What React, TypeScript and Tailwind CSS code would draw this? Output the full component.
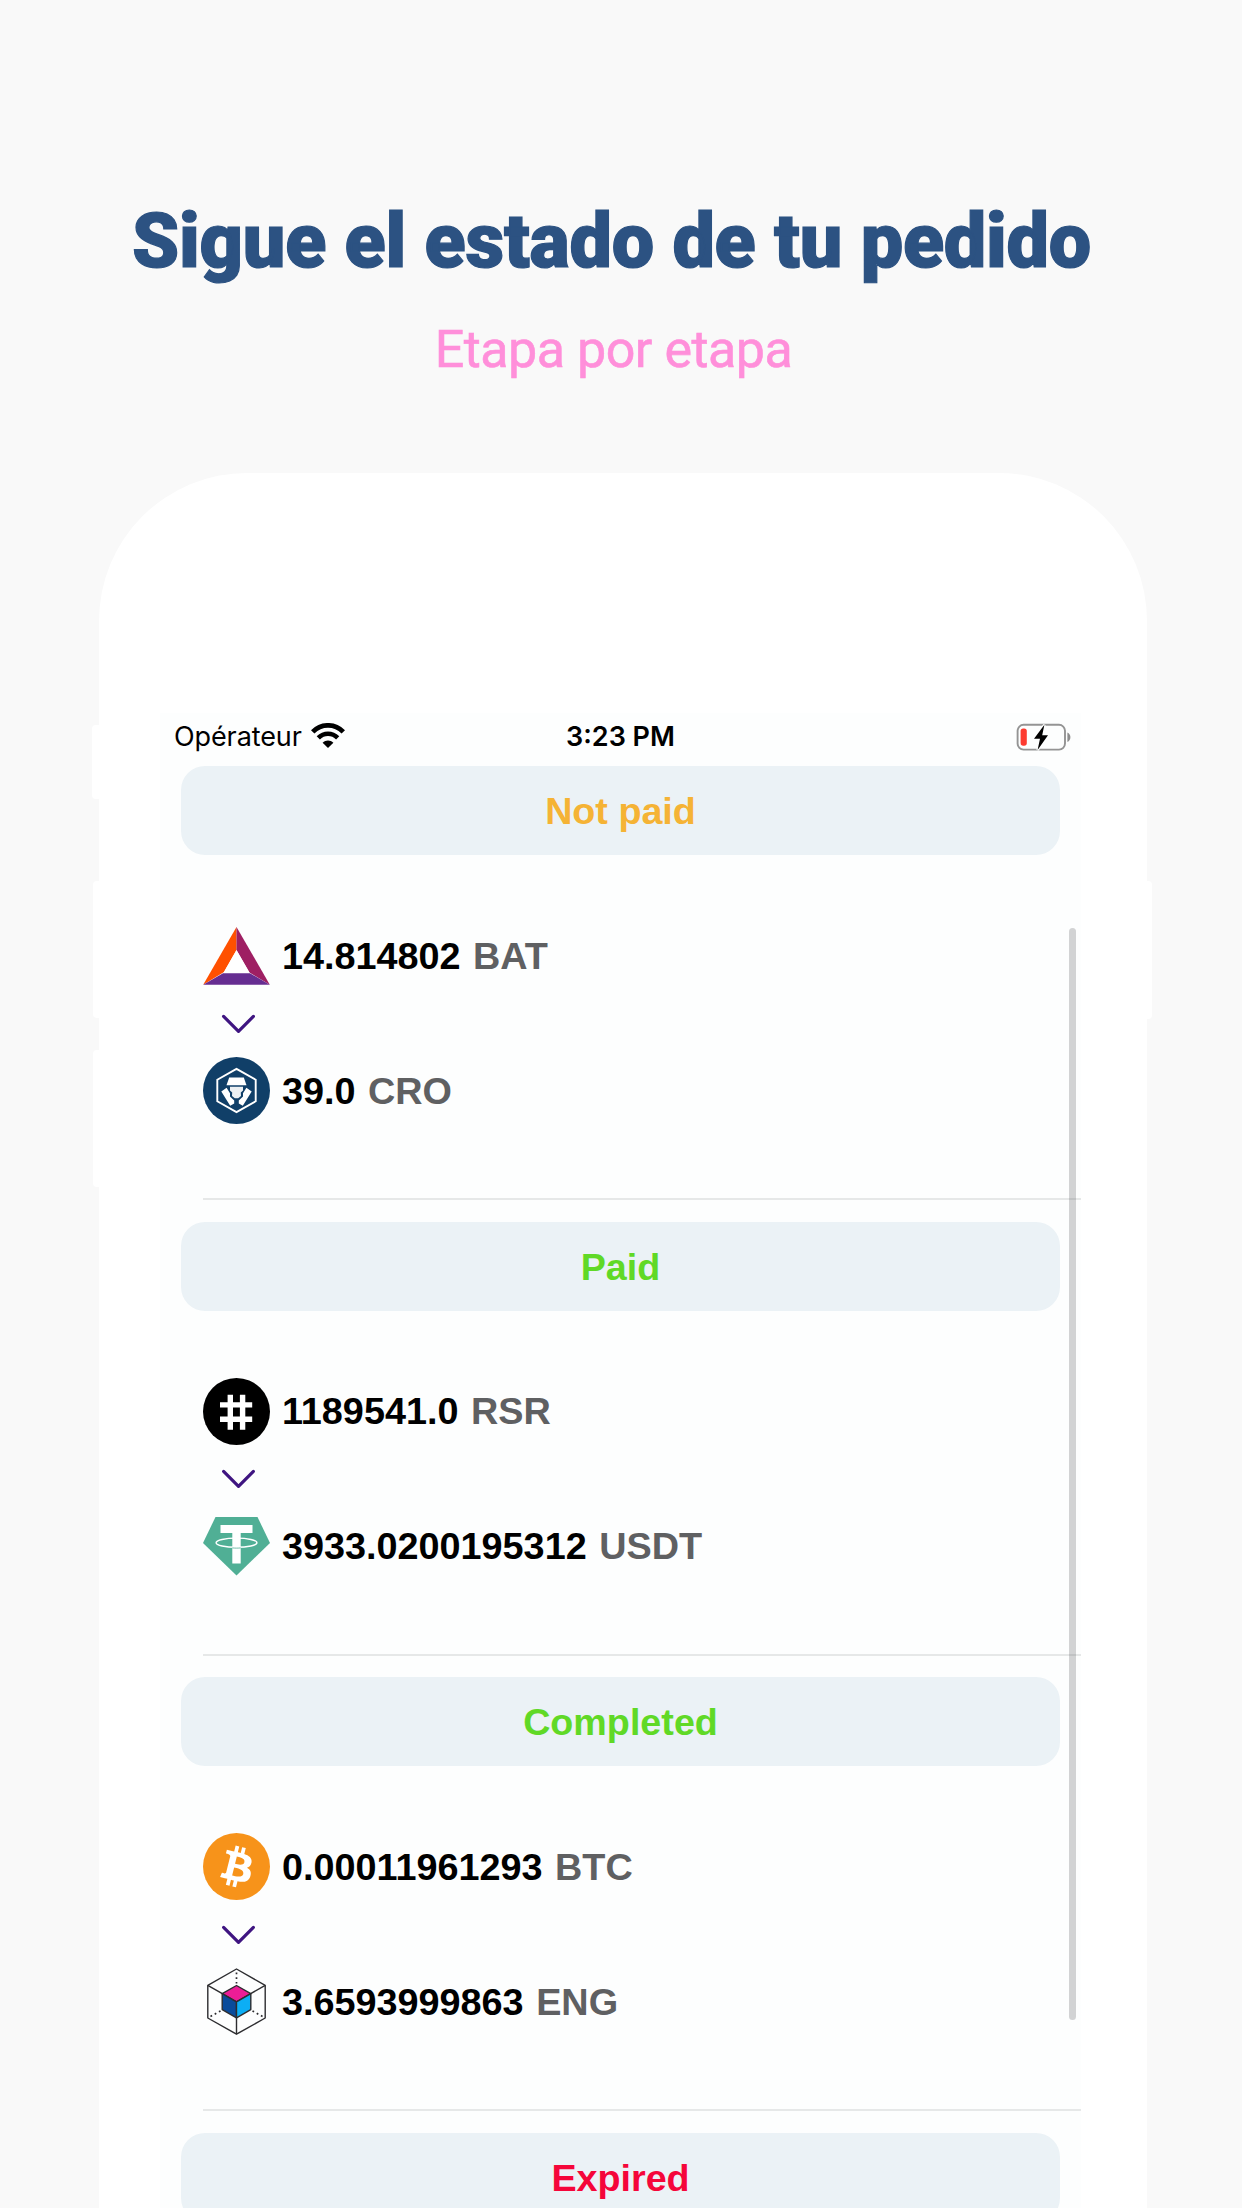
import React from "react";

const BatIcon = () => (
  <svg className="h-[67px] w-[67px]" viewBox="0 0 67 67">
    <path d="M33.5 5 33.5 28 21 50 0.2 62.7Z" fill="#ff5000" />
    <path d="M33.5 5 66.8 62.7 46.5 50.5 33.5 28Z" fill="#9e1f63" />
    <path d="M0.2 62.7 20.5 51 46.5 51 66.8 62.7Z" fill="#662d91" />
    <path d="M33.5 28 46.8 51.2 20.2 51.2Z" fill="#fff" />
  </svg>
);

const CroIcon = () => (
  <svg className="h-[67px] w-[67px]" viewBox="0 0 67 67">
    <circle cx="33.5" cy="33.5" r="33.5" fill="#103f68" />
    <path d="M33.5 11.8 52.7 22.7V44.3L33.5 55.2 14.3 44.3V22.7Z" fill="none" stroke="#fff" strokeWidth="1.9" />
    <g fill="#fff">
      <path d="M26.2 20.5H40.8L43.5 28.3H23.5Z" />
      <path d="M27 29.8H40V33.6L37.8 35.6 38 39 35.2 41.2H31.8L29 39 29.2 35.6 27 33.6Z" fillOpacity=".92" />
      <path d="M18.3 34.4 23.6 30.8 27 36.2V39.6L31.2 43.6V46.4L27.2 48.8Z" />
      <path d="M48.7 34.4 43.4 30.8 40 36.2V39.6L35.8 43.6V46.4L39.8 48.8Z" />
    </g>
  </svg>
);

const RsrIcon = () => (
  <svg className="h-[67px] w-[67px]" viewBox="0 0 67 67">
    <circle cx="33.5" cy="33.5" r="33.5" fill="#000" />
    <path d="M27.3 16.8V51.8M39.6 16.8V51.8M17 26.9H49.2M17 41.2H49.2" fill="none" stroke="#fff" strokeWidth="5.4" />
  </svg>
);

const UsdtIcon = () => (
  <svg className="h-[67px] w-[67px]" viewBox="0 0 67 67">
    <path d="M12.5 4H54.5L67 30 33.5 62.4 0 30Z" fill="#50af95" />
    <path d="M17.5 12H49.5V20H37.7V50.4H29.3V20H17.5Z" fill="#fff" />
    <ellipse cx="33.5" cy="29.7" rx="20.4" ry="4.6" fill="none" stroke="#fff" strokeWidth="1.4" />
    <path d="M29.3 34.9C31.5 35.2 35.5 35.2 37.7 34.9" fill="none" stroke="#50af95" strokeWidth=".8" />
  </svg>
);

const BtcIcon = () => (
  <svg className="h-[67px] w-[67px]" viewBox="0 0 32 32">
    <circle cx="16" cy="16" r="16" fill="#f7931a" />
    <path
      fill="#fff"
      d="M23.189 14.02c.314-2.096-1.283-3.223-3.465-3.975l.708-2.84-1.728-.43-.69 2.765c-.454-.114-.92-.22-1.385-.326l.695-2.783L15.596 6l-.708 2.839c-.376-.086-.746-.17-1.104-.26l.002-.009-2.384-.595-.46 1.846s1.283.294 1.256.312c.7.175.826.638.805 1.006l-.806 3.235c.048.012.11.03.18.057l-.183-.045-1.13 4.532c-.086.212-.303.531-.793.41.018.025-1.256-.313-1.256-.313l-.858 1.978 2.25.561c.418.105.828.215 1.231.318l-.715 2.872 1.727.43.708-2.84c.472.127.93.245 1.378.357l-.706 2.828 1.728.43.715-2.866c2.948.558 5.164.333 6.097-2.333.752-2.146-.037-3.385-1.588-4.192 1.13-.26 1.98-1.003 2.207-2.538zm-3.95 5.538c-.533 2.147-4.148.986-5.32.695l.95-3.805c1.172.293 4.929.872 4.37 3.11zm.535-5.569c-.487 1.953-3.495.96-4.47.717l.86-3.45c.975.243 4.118.696 3.61 2.733z"
    />
  </svg>
);

const EngIcon = () => (
  <svg className="h-[67px] w-[67px]" viewBox="0 0 67 67" fill="none" stroke="#2d2d30" strokeWidth="1.4" strokeLinejoin="round">
    <path d="M33.5 1 62.2 17.3V50L33.5 66.2 4.8 50V17.3Z" />
    <path d="M4.8 17.3 19.3 25.7M62.2 17.3 47.7 25.7M33.5 49.5V66" />
    <path d="M33.5 4.5V15.5M17.5 43 6.5 49M49.5 43 60.5 49" strokeWidth="1.7" strokeDasharray="1.8 3" />
    <path d="M33.5 17.5 47.8 25.7 33.5 33.8 19.2 25.7Z" fill="#ec1d96" />
    <path d="M19.2 25.7 33.5 33.8V49.8L19.2 41.6Z" fill="#0a4b9b" />
    <path d="M47.8 25.7 33.5 33.8V49.8L47.8 41.6Z" fill="#0caef5" />
  </svg>
);

const Chevron = () => (
  <svg className="ml-[18px] h-5 w-[35px]" viewBox="0 0 35 20" fill="none" stroke="#3f1581" strokeWidth="3.2" strokeLinecap="round" strokeLinejoin="round">
    <path d="M2.6 2.4 17.5 17.4 32.4 2.4" />
  </svg>
);

const Wifi = () => (
  <svg className="mb-[3px] h-[25px] w-[34px]" viewBox="0 0 34 25" fill="none" stroke="#000">
    <path d="M1.7 8.9C10.3 .2 23.7 .2 32.3 8.9" strokeWidth="4.8" />
    <path d="M7.3 14.8C12.8 9.4 21.2 9.4 26.7 14.8" strokeWidth="4.6" />
    <path d="M11.6 19.8C14.8 16.6 19.2 16.6 22.4 19.8L17 25Z" fill="#000" stroke="none" />
  </svg>
);

const Battery = () => (
  <svg className="mb-px h-7 w-[56px]" viewBox="0 0 56 28">
    <rect x="1.6" y="1.8" width="47.4" height="24.8" rx="6" fill="none" stroke="#949494" strokeWidth="1.9" />
    <path d="M51.4 9.5C55.4 11 55.4 17.4 51.4 18.9Z" fill="#8d8d8d" />
    <rect x="4.6" y="5.5" width="6.2" height="17.2" rx="2.6" fill="#fd3b30" />
    <path d="M28.4 1.8 18 15.7H24L21.6 27 32 12.3H26.2Z" fill="#000" stroke="#fdfefe" strokeWidth="2.4" paintOrder="stroke" />
  </svg>
);

type Leg = { icon: React.ReactNode; amount: string; symbol: string };

const Amount = ({ icon, amount, symbol }: Leg) => (
  <div className="flex h-[67px] items-center gap-[11.5px]">
    {icon}
    <p className="text-[37.8px] leading-[44px] font-bold whitespace-pre text-black [word-spacing:2px]">
      {amount} <span className="text-[#5f6062]">{symbol}</span>
    </p>
  </div>
);

const Status = ({ label, color }: { label: string; color: string }) => (
  <div className={`ml-[21px] flex h-[89px] w-[879px] items-center justify-center rounded-[24px] bg-[#ebf2f6] pt-px text-[37.7px] leading-[44px] font-bold ${color}`}>
    {label}
  </div>
);

const Order = ({ label, color, from, to }: { label: string; color: string; from: Leg; to: Leg }) => (
  <section className="flex h-[455.67px] flex-col">
    <Status label={label} color={color} />
    <div className="ml-[43.4px] flex h-[345px] flex-col border-b-2 border-[#e6e8e8] pt-[67px]">
      <Amount {...from} />
      <div className="flex h-[68px] items-center pt-px">
        <Chevron />
      </div>
      <Amount {...to} />
    </div>
  </section>
);

export default function App() {
  return (
    <main className="h-[2208px] w-[1242px] overflow-hidden bg-[#f9f9f9] font-['Liberation_Sans',sans-serif]">
      <header className="flex h-[473px] flex-col items-center font-['Roboto',sans-serif]">
        <h1 className="mt-[196px] mr-[19px] text-[75.5px] leading-[90px] font-black tracking-[-0.25px] whitespace-nowrap text-[#2c5282] [-webkit-text-stroke:1.2px_#2c5282]">
          Sigue el estado de tu pedido
        </h1>
        <p className="mt-[34px] mr-[15px] text-[52px] leading-[60px] tracking-[-0.5px] whitespace-nowrap text-[#ff8fda] [-webkit-text-stroke:0.6px_#ff8fda]">
          Etapa por etapa
        </p>
      </header>

      <div className="relative ml-[99px] h-[1900px] w-[1048px] rounded-t-[148px] bg-white pt-[240px] pl-[61px]">
        <i className="absolute top-[252px] -left-[7px] h-[74px] w-3 rounded-l bg-white" />
        <i className="absolute top-[408px] -left-[6px] h-[137px] w-3 rounded-l bg-white" />
        <i className="absolute top-[577px] -left-[6px] h-[137px] w-3 rounded-l bg-white" />
        <i className="absolute top-[408px] -right-[5px] h-[138px] w-3 rounded-r bg-white" />

        <div className="relative h-[1660px] w-[921px] bg-[#fdfefe]">
          <div className="grid h-[53px] grid-cols-3 items-center pb-[5px] font-['Inter',sans-serif] text-[27px] leading-8 text-black">
            <div className="flex items-center gap-[9px] pl-[14px]">
              <span className="tracking-[-0.1px]">Opérateur</span>
              <Wifi />
            </div>
            <span className="text-center font-semibold whitespace-nowrap">3:23 PM</span>
            <div className="flex justify-end pr-[9px]">
              <Battery />
            </div>
          </div>
          <Order
            label="Not paid"
            color="text-[#f5b335]"
            from={{ icon: <BatIcon />, amount: "14.814802", symbol: "BAT" }}
            to={{ icon: <CroIcon />, amount: "39.0", symbol: "CRO" }}
          />
          <Order
            label="Paid"
            color="text-[#60d926]"
            from={{ icon: <RsrIcon />, amount: "1189541.0", symbol: "RSR" }}
            to={{ icon: <UsdtIcon />, amount: "3933.0200195312", symbol: "USDT" }}
          />
          <Order
            label="Completed"
            color="text-[#60d926]"
            from={{ icon: <BtcIcon />, amount: "0.00011961293", symbol: "BTC" }}
            to={{ icon: <EngIcon />, amount: "3.6593999863", symbol: "ENG" }}
          />
          <Status label="Expired" color="text-[#f5063a]" />
          <i className="absolute top-[215px] right-[5px] h-[1092px] w-[7px] rounded-full bg-[#3a3c40]/22" />
        </div>
      </div>
    </main>
  );
}
